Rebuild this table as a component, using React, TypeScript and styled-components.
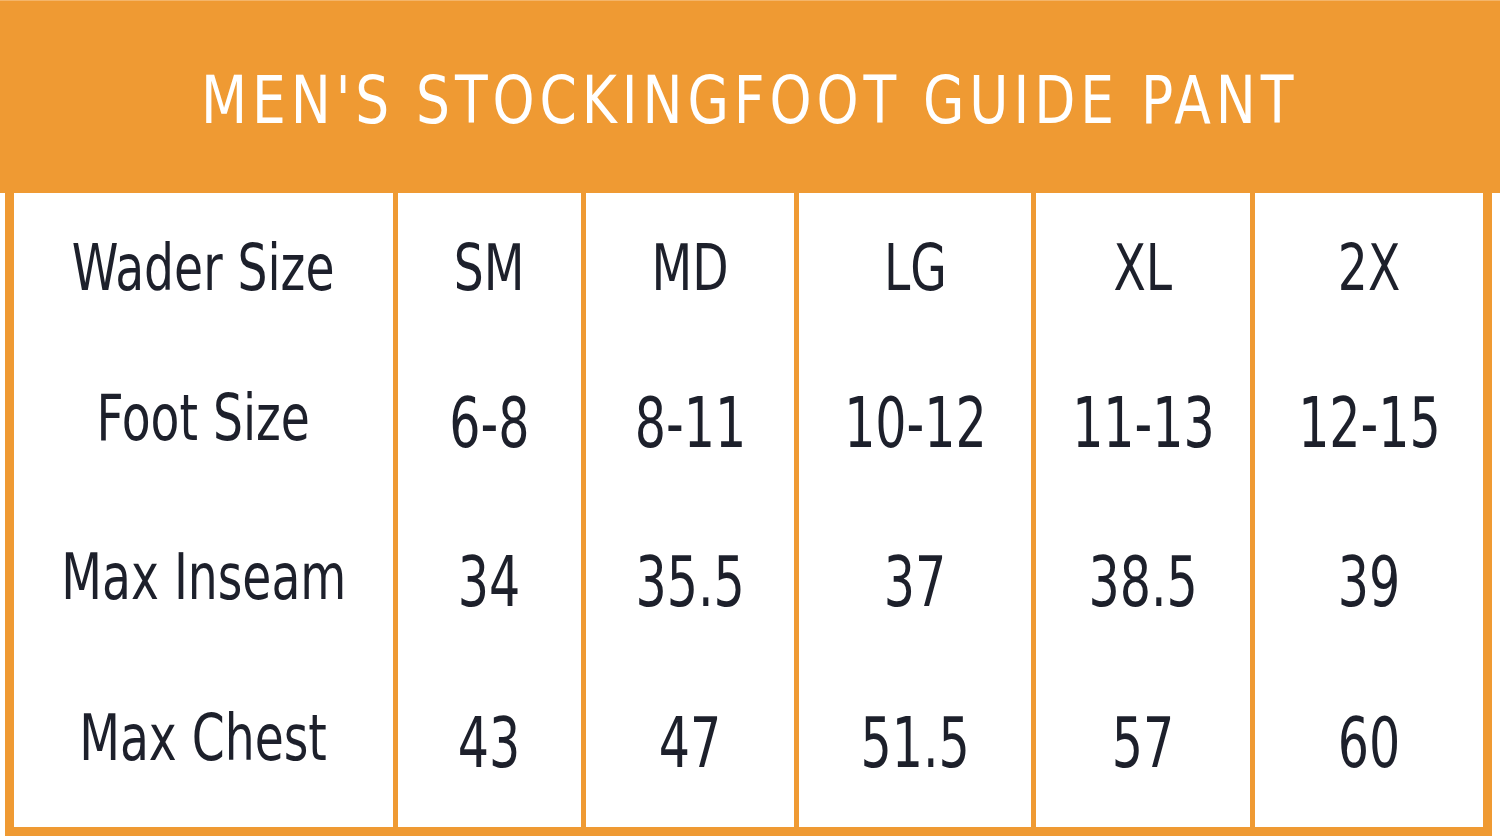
import { Fragment } from 'react';
import styled, { createGlobalStyle } from 'styled-components';

const ORANGE = '#ef9a33';
const INK = '#1d202b';
const FONT = `"DejaVu Sans Condensed", "DejaVu Sans", Roboto, sans-serif`;

const GlobalStyle = createGlobalStyle`
  html, body {
    margin: 0;
    padding: 0;
    background: #fff;
  }
  body {
    font-family: ${FONT};
    font-stretch: condensed;
  }
`;

const Sheet = styled.div`
  width: 1500px;
  height: 836px;
  display: flex;
  flex-direction: column;
  background: #fff;
  overflow: hidden;
`;

const Banner = styled.header`
  height: 192px;
  flex: none;
  display: flex;
  align-items: center;
  justify-content: center;
  background: ${ORANGE};
  border-top: 1px solid #f4b56a;
`;

// condensed face squeezed a little more to get the narrow DIN-like look
const Title = styled.h1`
  margin: 0;
  padding-top: 6px;
  font-family: ${FONT};
  font-stretch: condensed;
  font-size: 66px;
  font-weight: 400;
  letter-spacing: 5.5px;
  color: #fff;
  white-space: nowrap;
  transform: scaleX(0.9);
`;

const Frame = styled.div`
  flex: 1;
  display: flex;
  padding: 0 8px 0 5px;
`;

const Grid = styled.div`
  flex: 1;
  display: grid;
  grid-template-columns: 379px 183px 208px 232px 214px 228px;
  grid-template-rows: 150px 150px 168px 1fr;
  column-gap: 5px;
  background: ${ORANGE};
  border-left: 9px solid ${ORANGE};
  border-right: 9px solid ${ORANGE};
  border-bottom: 9px solid ${ORANGE};
`;

const Cell = styled.div<{ $last?: boolean }>`
  display: flex;
  align-items: center;
  justify-content: center;
  background: #fff;
  padding-bottom: ${({ $last }) => ($last ? '12px' : '0')};
`;

const Text = styled.span<{ $value?: boolean }>`
  display: block;
  color: ${INK};
  font-family: ${FONT};
  font-stretch: condensed;
  font-size: ${({ $value }) => ($value ? '70px' : '64px')};
  line-height: 1;
  padding-top: ${({ $value }) => ($value ? '10px' : '0')};
  white-space: nowrap;
  transform: scaleX(${({ $value }) => ($value ? 0.78 : 0.82)});
`;

const rows: { label: string; values: string[]; head?: boolean }[] = [
  { label: 'Wader Size', values: ['SM', 'MD', 'LG', 'XL', '2X'], head: true },
  { label: 'Foot Size', values: ['6-8', '8-11', '10-12', '11-13', '12-15'] },
  { label: 'Max Inseam', values: ['34', '35.5', '37', '38.5', '39'] },
  { label: 'Max Chest', values: ['43', '47', '51.5', '57', '60'] },
];

export default function App() {
  return (
    <>
      <GlobalStyle />
      <Sheet>
        <Banner>
          <Title>MEN'S STOCKINGFOOT GUIDE PANT</Title>
        </Banner>
        <Frame>
          <Grid>
            {rows.map((row, i) => {
              const last = i === rows.length - 1;
              return (
                <Fragment key={row.label}>
                  <Cell $last={last}>
                    <Text>{row.label}</Text>
                  </Cell>
                  {row.values.map((v) => (
                    <Cell key={v} $last={last}>
                      <Text $value={!row.head}>{v}</Text>
                    </Cell>
                  ))}
                </Fragment>
              );
            })}
          </Grid>
        </Frame>
      </Sheet>
    </>
  );
}
